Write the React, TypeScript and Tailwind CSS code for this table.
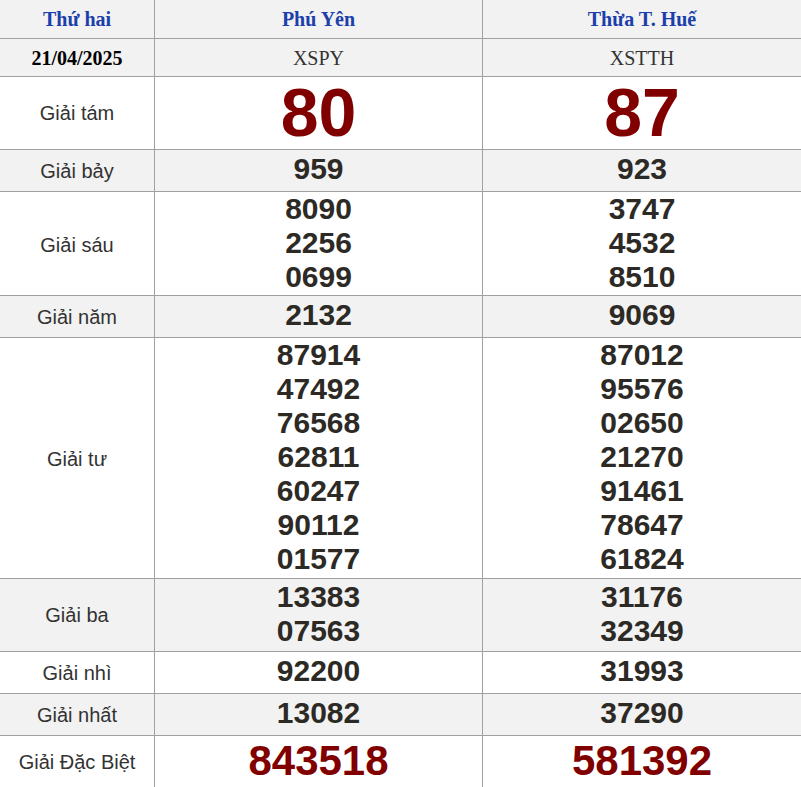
const rows = [
  { label: "Giải tám", a: ["80"], b: ["87"], h: "h-[73px]", gray: false, kind: "big" },
  { label: "Giải bảy", a: ["959"], b: ["923"], h: "h-[42px]", gray: true, kind: "num" },
  { label: "Giải sáu", a: ["8090", "2256", "0699"], b: ["3747", "4532", "8510"], h: "h-[104px]", gray: false, kind: "num" },
  { label: "Giải năm", a: ["2132"], b: ["9069"], h: "h-[42px]", gray: true, kind: "num" },
  {
    label: "Giải tư",
    a: ["87914", "47492", "76568", "62811", "60247", "90112", "01577"],
    b: ["87012", "95576", "02650", "21270", "91461", "78647", "61824"],
    h: "h-[241px]",
    gray: false,
    kind: "num",
  },
  { label: "Giải ba", a: ["13383", "07563"], b: ["31176", "32349"], h: "h-[73px]", gray: true, kind: "num" },
  { label: "Giải nhì", a: ["92200"], b: ["31993"], h: "h-[42px]", gray: false, kind: "num" },
  { label: "Giải nhất", a: ["13082"], b: ["37290"], h: "h-[42px]", gray: true, kind: "num" },
  { label: "Giải Đặc Biệt", a: ["843518"], b: ["581392"], h: "h-[52px]", gray: false, kind: "db" },
]

function Numbers({ values, kind }: { values: string[]; kind: string }) {
  const cls =
    kind === "big"
      ? "text-[68px] leading-[68px] text-[#800000]"
      : kind === "db"
        ? "text-[42px] leading-[48px] text-[#800000]"
        : "text-[30px] leading-[34px] text-[#2d2a26]"
  return (
    <div className="flex flex-col items-center justify-center pb-[3px]">
      {values.map((v) => (
        <span key={v} className={`font-bold ${cls}`}>
          {v}
        </span>
      ))}
    </div>
  )
}

export default function App() {
  return (
    <div className="w-[801px] h-[787px] overflow-hidden bg-white font-['Liberation_Sans',Arial,sans-serif]">
      <div className="grid grid-cols-[155px_328px_1fr] h-[39px] bg-[#f2f2f2] border-b border-[#a0a0a0] font-['Liberation_Serif','Times_New_Roman',serif] font-bold text-[20px] text-[#1c3fab]">
        <div className="flex items-center justify-center border-r border-[#a0a0a0]">Thứ hai</div>
        <div className="flex items-center justify-center border-r border-[#a0a0a0]">Phú Yên</div>
        <div className="flex items-center justify-center">Thừa T. Huế</div>
      </div>
      <div className="grid grid-cols-[155px_328px_1fr] h-[38px] bg-[#f2f2f2] border-b border-[#a0a0a0] font-['Liberation_Serif','Times_New_Roman',serif] text-[20px]">
        <div className="flex items-center justify-center border-r border-[#a0a0a0] font-bold text-black">21/04/2025</div>
        <div className="flex items-center justify-center border-r border-[#a0a0a0] text-[#333]">XSPY</div>
        <div className="flex items-center justify-center text-[#333]">XSTTH</div>
      </div>
      {rows.map((r) => (
        <div
          key={r.label}
          className={`grid grid-cols-[155px_328px_1fr] ${r.h} ${r.kind === "db" ? "" : "border-b border-[#a0a0a0]"} ${r.gray ? "bg-[#f2f2f2]" : "bg-white"}`}
        >
          <div className="flex items-center justify-center border-r border-[#a0a0a0] text-[20px] text-[#333]">
            {r.label}
          </div>
          <div className="flex items-center justify-center border-r border-[#a0a0a0]">
            <Numbers values={r.a} kind={r.kind} />
          </div>
          <div className="flex items-center justify-center">
            <Numbers values={r.b} kind={r.kind} />
          </div>
        </div>
      ))}
    </div>
  )
}
